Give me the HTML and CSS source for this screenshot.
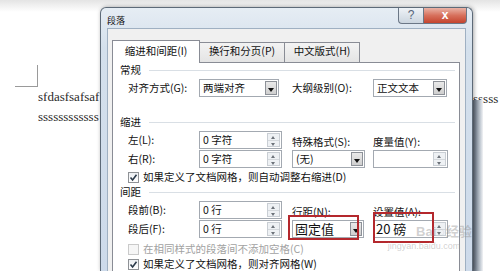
FILE: index.html
```html
<!DOCTYPE html>
<html lang="zh-CN">
<head>
    <meta charset="UTF-8">
    <meta name="viewport" content="width=device-width, initial-scale=1.0">
    <title>段落</title>
    <link rel="stylesheet" href="styles.css">
</head>
<body>
    <div class="doc">
        <div class="margin-mark"></div>
        <div class="doc-line">
            <span class="left-text">sfdasfsafsaf</span>
            <span class="right-text">sssss</span>
        </div>
        <div class="doc-line">
            <span class="left-text">ssssssssssss</span>
        </div>
    </div>

    <div class="edge-shade"></div>

    <div class="dialog">
        <div class="title-bar">
            <span class="title">段落</span>
            <div class="caption">
                <span class="cap help">?</span>
                <span class="cap close">x</span>
            </div>
        </div>

        <div class="client">
            <div class="tabs">
                <div class="tab active">缩进和间距(I)</div>
                <div class="tab">换行和分页(P)</div>
                <div class="tab">中文版式(H)</div>
            </div>

            <div class="panel">
                <div class="group">常规</div>
                <div class="grid g-general">
                    <span>对齐方式(G):</span>
                    <div class="combo w80"><span class="val">两端对齐</span><span class="drop"></span></div>
                    <span>大纲级别(O):</span>
                    <div class="combo w74"><span class="val">正文文本</span><span class="drop"></span></div>
                </div>

                <div class="group g-indent">缩进</div>
                <div class="grid g-rows">
                    <span>左(L):</span>
                    <div class="spin w83"><span class="val">0 字符</span><span class="arrows"><i class="up"></i><i class="down"></i></span></div>
                    <span class="top-label">特殊格式(S):</span>
                    <span class="top-label">度量值(Y):</span>

                    <span>右(R):</span>
                    <div class="spin w83"><span class="val">0 字符</span><span class="arrows"><i class="up"></i><i class="down"></i></span></div>
                    <div class="combo w73"><span class="val">(无)</span><span class="drop"></span></div>
                    <div class="spin w75"><span class="val"></span><span class="arrows"><i class="up"></i><i class="down"></i></span></div>
                </div>
                <label class="check-row c1"><span class="box checked"><svg width="9" height="9" viewBox="0 0 9 9"><polyline points="1.5,4.5 3.6,7 7.5,1.8" fill="none" stroke="#2b3a4a" stroke-width="1.6"/></svg></span>如果定义了文档网格，则自动调整右缩进(D)</label>

                <div class="group g-space">间距</div>
                <div class="grid g-rows">
                    <span>段前(B):</span>
                    <div class="spin w83"><span class="val">0 行</span><span class="arrows"><i class="up"></i><i class="down"></i></span></div>
                    <span class="top-label">行距(N):</span>
                    <span class="top-label">设置值(A):</span>

                    <span>段后(F):</span>
                    <div class="spin w83"><span class="val">0 行</span><span class="arrows"><i class="up"></i><i class="down"></i></span></div>
                    <div class="combo w72 big"><span class="val">固定值</span><span class="drop"></span><span class="mark mark-combo"></span></div>
                    <div class="spin w75 big"><span class="val">20 磅</span><span class="arrows"><i class="up"></i><i class="down"></i></span><span class="mark mark-spin"></span></div>
                </div>
                <label class="check-row c2 disabled"><span class="box"></span>在相同样式的段落间不添加空格(C)</label>
                <label class="check-row c3"><span class="box checked"><svg width="9" height="9" viewBox="0 0 9 9"><polyline points="1.5,4.5 3.6,7 7.5,1.8" fill="none" stroke="#2b3a4a" stroke-width="1.6"/></svg></span>如果定义了文档网格，则对齐网格(W)</label>
            </div>
        </div>
    </div>

    <div class="watermark">
        <span class="wm-logo">Bai<b>◌</b>经验</span>
        <span class="wm-url">jingyan.baidu.com</span>
    </div>
</body>
</html>
```

FILE: styles.css
```css
* {
    box-sizing: border-box;
}

body {
    margin: 0;
    width: 500px;
    height: 271px;
    overflow: hidden;
    position: relative;
    background: linear-gradient(#e4e4e4, #f4f4f4 7px, #ffffff 12px);
    font-family: "Noto Sans CJK SC", "Liberation Sans", sans-serif;
    font-size: 10.5px;
    color: #111;
}

/* document behind the dialog */
.doc {
    padding: 65px 0 0 15px;
    font-family: "Liberation Serif", serif;
    font-size: 13px;
    color: #2a2a2a;
}

.margin-mark {
    width: 23px;
    height: 22px;
    border-right: 1px solid #9a9a9a;
    border-bottom: 1px solid #9a9a9a;
}

.doc-line {
    display: flex;
    margin-left: 23px;
    height: 20px;
    line-height: 20px;
    white-space: nowrap;
}

.left-text {
    width: 62px;
    overflow: hidden;
}

.right-text {
    width: 27px;
    margin-left: 373px;
    overflow: hidden;
    line-height: 23px;
}

.edge-shade {
    position: absolute;
    left: 471px;
    top: 100px;
    bottom: 0;
    width: 12px;
    background: linear-gradient(to right, #4d5662, #7c8794 40%, #c9d0d8 80%, #f2f3f5);
}

/* dialog window */
.dialog {
    position: absolute;
    left: 100px;
    top: 7px;
    width: 373px;
    height: 264px;
    overflow: hidden;
    padding: 0 6px;
    border: 1px solid #5d6a78;
    border-bottom: none;
    border-radius: 6px 6px 0 0;
    background: linear-gradient(#e6edf4, #d4e0ec 40px, #cddaea);
    box-shadow: 1px 0 4px rgba(0, 0, 0, 0.35);
}

.title-bar {
    height: 20px;
    display: flex;
    justify-content: space-between;
    align-items: flex-start;
}

.title {
    padding-top: 6px;
    line-height: 13px;
    font-size: 9px;
}

.caption {
    display: flex;
    margin-right: -1px;
}

.cap {
    height: 16px;
    line-height: 14px;
    text-align: center;
    border: 1px solid #6b7786;
    border-top: none;
    font-family: "Liberation Sans", sans-serif;
}

.help {
    width: 25px;
    border-radius: 0 0 0 4px;
    border-right: none;
    background: linear-gradient(#eef2f6, #cbd5df);
    color: #56657a;
    font-size: 12px;
}

.close {
    width: 44px;
    border-radius: 0 0 4px 0;
    background: linear-gradient(#eab3a6, #d7705c 50%, #c4442e);
    color: #fff;
    font-weight: bold;
    font-size: 12px;
}

.client {
    height: 260px;
    padding: 11px 0 0 4px;
    border: 1px solid #9fb0c2;
    background: #f0f0f0;
}

/* tabs */
.tabs {
    display: flex;
    align-items: flex-start;
    height: 23px;
    position: relative;
    z-index: 1;
}

.tab {
    height: 20px;
    margin-top: 2px;
    padding-top: 1px;
    line-height: 14px;
    text-align: center;
    border: 1px solid #898c95;
    border-bottom: none;
    background: linear-gradient(#f3f3f3, #e4e4e4);
    margin-left: -1px;
}

.tab.active {
    height: 23px;
    margin-top: 0;
    margin-left: 0;
    padding-top: 3px;
    width: 88px;
    background: #fff;
}

.tab:nth-child(2) {
    width: 86px;
}

.tab:nth-child(3) {
    width: 76px;
}

.panel {
    width: 348px;
    height: 240px;
    margin-top: -1px;
    padding-left: 7px;
    border: 1px solid #898c95;
    background: #fff;
}

.group {
    display: flex;
    align-items: center;
    height: 14px;
    line-height: 14px;
    margin-right: 4px;
}

.group::after {
    content: "";
    flex: 1;
    height: 1px;
    margin-left: 8px;
    background: #d9dfe5;
}

.g-indent {
    margin-top: 18px;
}

.g-space {
    margin-top: 1px;
}

.grid {
    display: grid;
    grid-template-columns: 71px 93px 81px 75px;
    grid-auto-rows: 18px;
    row-gap: 1px;
    align-items: center;
    margin-left: 8px;
    line-height: 14px;
}

.g-general {
    margin-top: 2px;
}

.g-rows {
    margin-top: 2px;
}

.top-label {
    padding-top: 3px;
}

/* fields */
.combo,
.spin {
    position: relative;
    display: flex;
    height: 18px;
    border: 1px solid #a3a9b1;
    background: #fff;
}

.w72 { width: 72px; }
.w73 { width: 73px; }
.w74 { width: 74px; }
.w75 { width: 75px; }
.w80 { width: 80px; }
.w83 { width: 83px; }

.val {
    flex: 1;
    padding-left: 3px;
    line-height: 16px;
    white-space: nowrap;
}

.big .val {
    font-size: 13px;
    padding-left: 2px;
}

.drop {
    position: relative;
    width: 12px;
    margin: 1px;
    border: 1px solid #8d9198;
    background: linear-gradient(#e9e9e9, #cfcfcf);
}

.drop::after {
    content: "";
    position: absolute;
    left: 2px;
    top: 6px;
    border-left: 3px solid transparent;
    border-right: 3px solid transparent;
    border-top: 4px solid #111;
}

.arrows {
    display: flex;
    flex-direction: column;
    width: 13px;
    margin: 1px;
    border: 1px solid #c9ced4;
    background: #eef1f4;
}

.arrows i {
    flex: 1;
    position: relative;
}

.arrows .up {
    border-bottom: 1px solid #d4d8dc;
}

.arrows i::after {
    content: "";
    position: absolute;
    left: 3px;
    top: 2px;
    border-left: 2.5px solid transparent;
    border-right: 2.5px solid transparent;
}

.arrows .up::after {
    border-bottom: 3px solid #6d737a;
}

.arrows .down::after {
    border-top: 3px solid #6d737a;
}

/* red annotation boxes */
.mark {
    position: absolute;
    border: 2px solid #b4282d;
}

.mark-combo {
    left: -5px;
    top: -6px;
    width: 71px;
    height: 25px;
}

.mark-spin {
    left: -1px;
    top: -9px;
    width: 61px;
    height: 31px;
}

/* checkboxes */
.check-row {
    display: flex;
    align-items: center;
    height: 14px;
    line-height: 14px;
    margin-left: 8px;
}

.c1 {
    margin-top: 2px;
}

.c2 {
    margin-top: 4px;
}

.c3 {
    margin-top: 1px;
}

.box {
    display: flex;
    align-items: center;
    justify-content: center;
    width: 11px;
    height: 11px;
    margin-right: 4px;
    border: 1px solid #8f9296;
    background: linear-gradient(#eceff2, #fff);
}

.disabled {
    color: #a2a2a2;
}

.disabled .box {
    border-color: #cacaca;
    background: #f6f6f6;
}

/* baidu watermark */
.watermark {
    position: absolute;
    left: 376px;
    top: 224px;
    display: flex;
    flex-direction: column;
    align-items: flex-end;
    width: 96px;
    color: rgba(150, 150, 150, 0.45);
    font-family: "Liberation Sans", "Noto Sans CJK SC", sans-serif;
}

.wm-logo {
    font-size: 13px;
    line-height: 16px;
    font-weight: bold;
}

.wm-logo b {
    margin: 0 1px;
}

.wm-url {
    font-size: 9px;
    line-height: 12px;
    align-self: center;
}
```
